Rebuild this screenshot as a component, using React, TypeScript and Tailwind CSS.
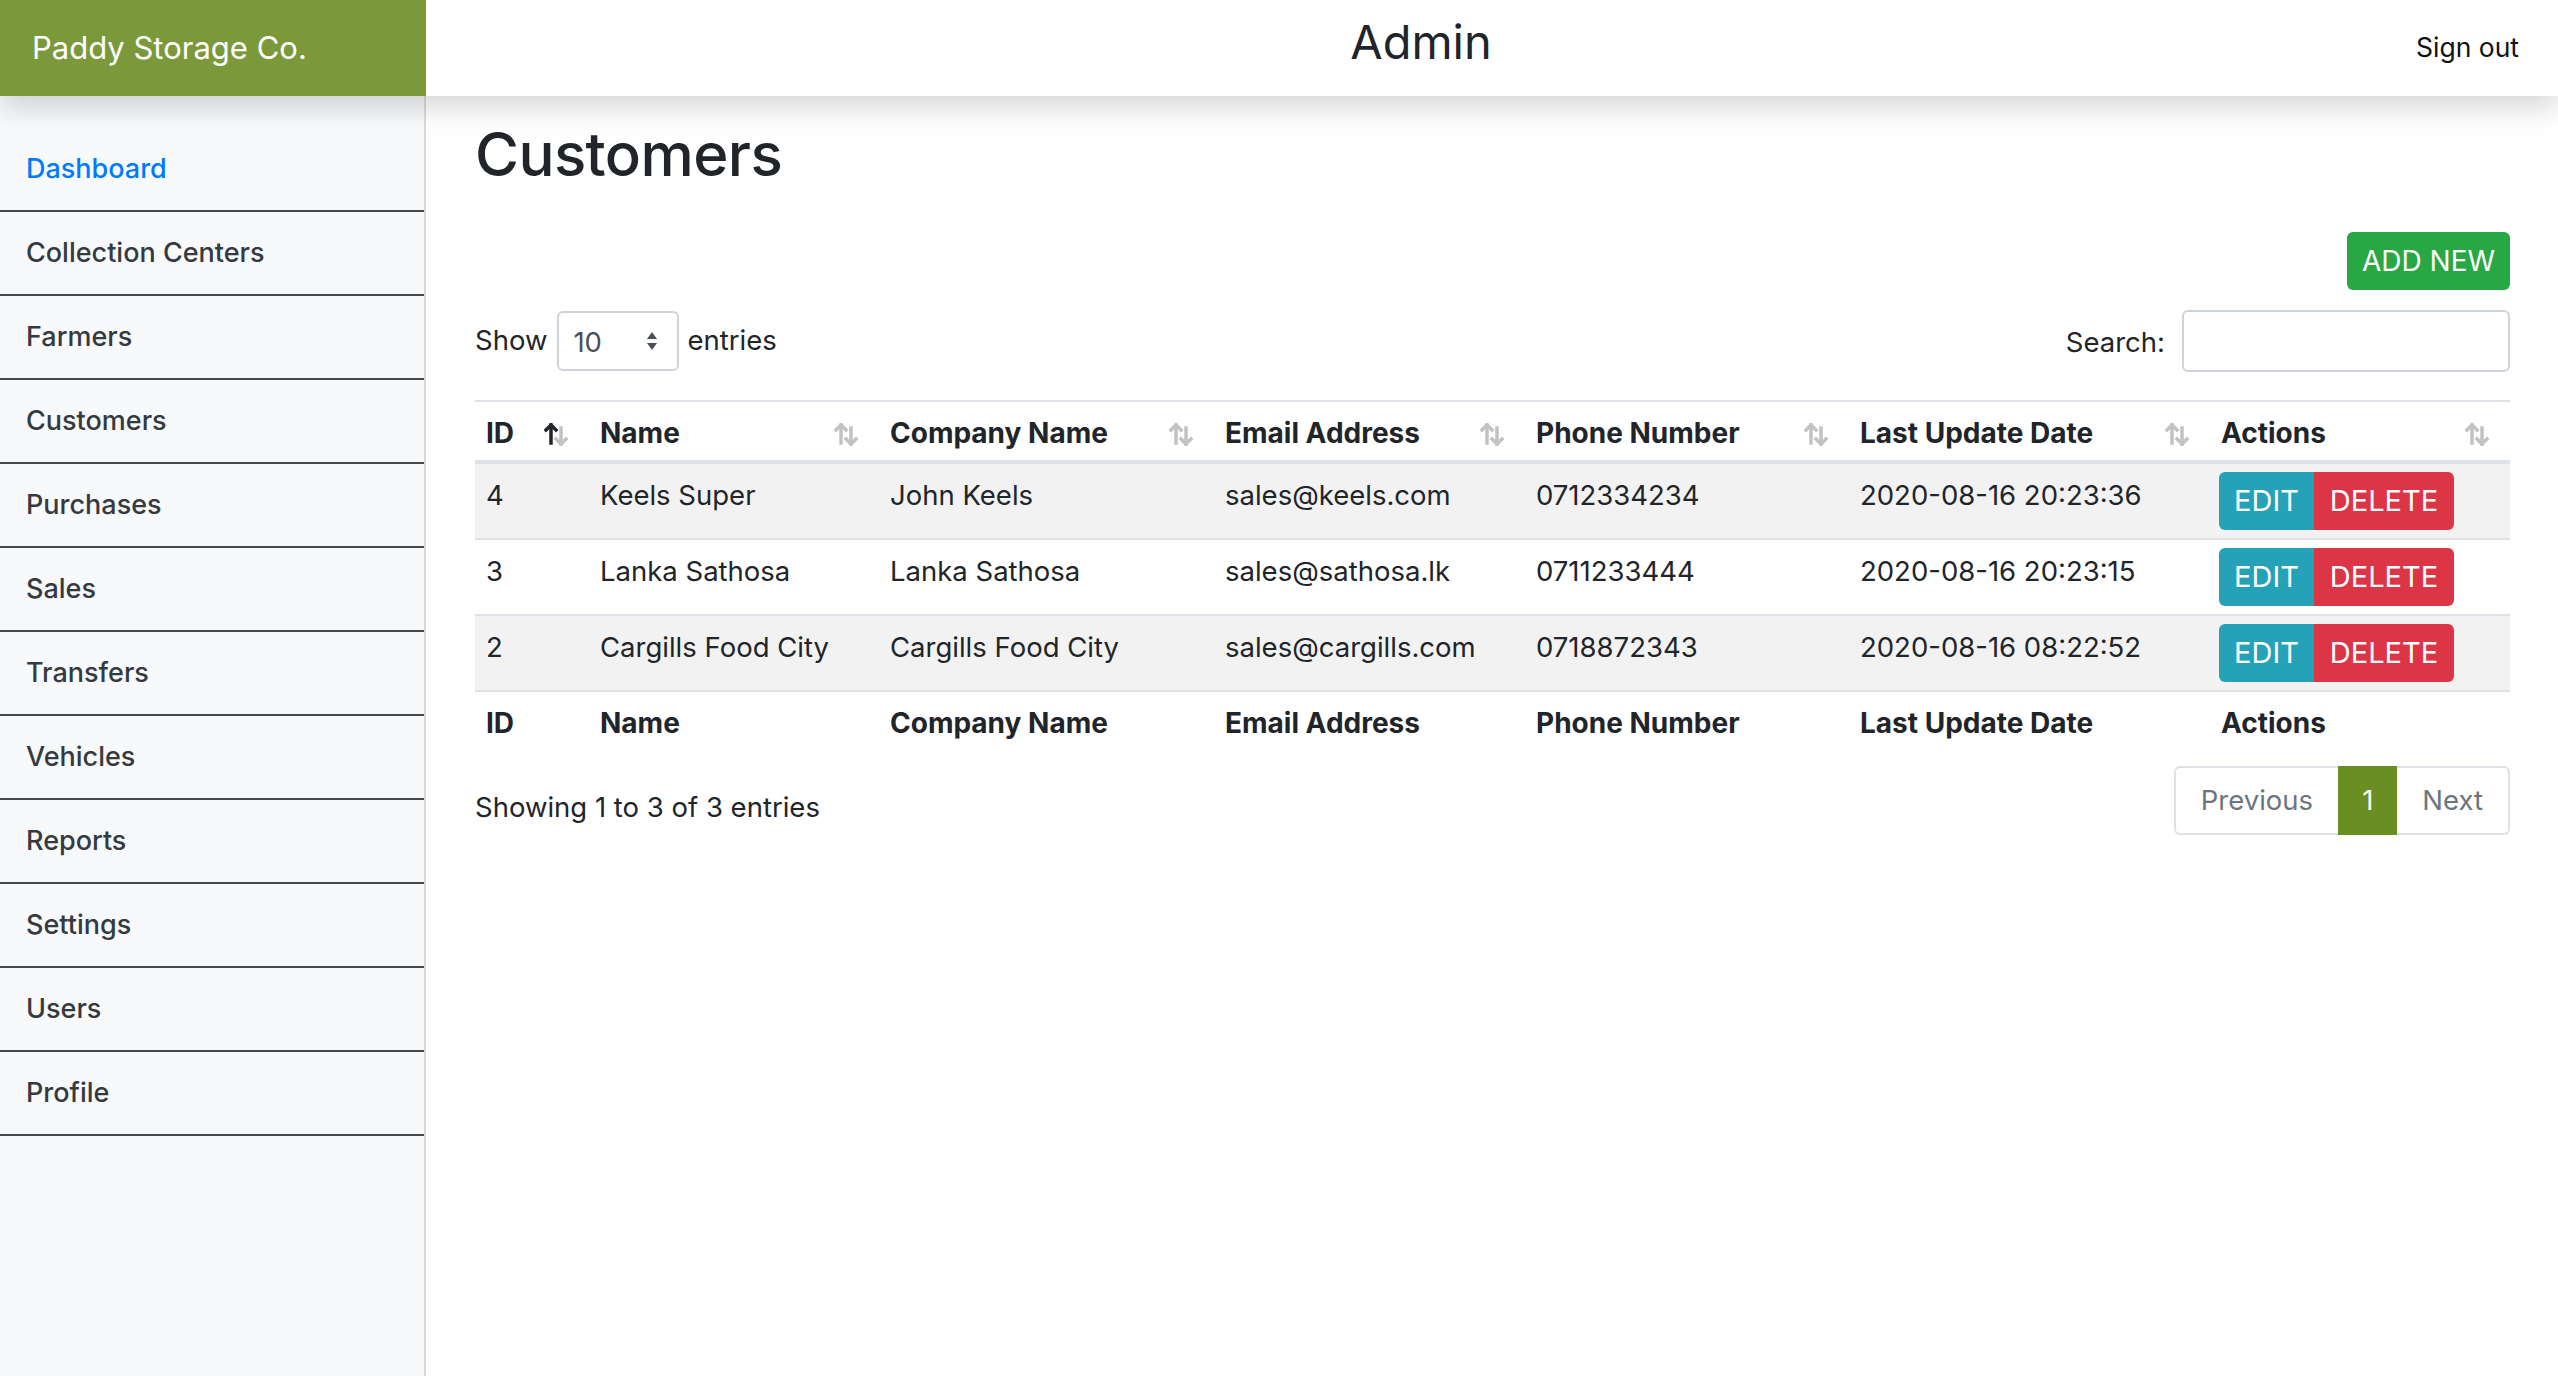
import React from 'react';

const navItems = [
    'Dashboard',
    'Collection Centers',
    'Farmers',
    'Customers',
    'Purchases',
    'Sales',
    'Transfers',
    'Vehicles',
    'Reports',
    'Settings',
    'Users',
    'Profile',
];

const customers = [
    { id: 4, name: 'Keels Super', company: 'John Keels', email: 'sales@keels.com', phone: '0712334234', updated: '2020-08-16 20:23:36' },
    { id: 3, name: 'Lanka Sathosa', company: 'Lanka Sathosa', email: 'sales@sathosa.lk', phone: '0711233444', updated: '2020-08-16 20:23:15' },
    { id: 2, name: 'Cargills Food City', company: 'Cargills Food City', email: 'sales@cargills.com', phone: '0718872343', updated: '2020-08-16 08:22:52' },
];

const columns = ['ID', 'Name', 'Company Name', 'Email Address', 'Phone Number', 'Last Update Date', 'Actions'];

const SortIcon: React.FC<{ active?: boolean }> = ({ active = false }) => (
    <svg width="28" height="24" viewBox="0 0 28 24" fill="none" strokeWidth="3.5" strokeLinecap="square">
        {/* up arrow */}
        <g stroke={active ? '#212529' : '#c2c2c2'}>
            <path d="M7 21V3" />
            <path d="M2 8l5-5 5 5" />
        </g>
        {/* down arrow */}
        <g stroke="#c2c2c2">
            <path d="M17 6v16" />
            <path d="M12 17l5 5 5-5" />
        </g>
    </svg>
);

const SelectArrows = () => (
    <svg width="12" height="22" viewBox="0 0 12 22" fill="#495057">
        <path d="M6 2l5 7H1z" />
        <path d="M6 20l5-7H1z" />
    </svg>
);

const App: React.FC = () => {
    return (
        <div className="min-h-screen bg-white text-[#212529] font-[Inter,sans-serif] text-[27.5px]">
            {/* Top bar */}
            <header className="relative z-10 h-[96px] flex items-center justify-between bg-white shadow-[0_13px_26px_rgba(0,0,0,0.15)]">
                <div className="w-[426px] h-full bg-[#7b993b] text-white text-[31px] flex items-center pl-[32px]">
                    Paddy Storage Co.
                </div>
                <h3 className="text-[47px] leading-none -mt-[14px]">Admin</h3>
                <a href="#" className="pr-[39px] text-[26.5px] text-[#111]">Sign out</a>
            </header>

            <div className="flex min-h-[1280px]">
                {/* Sidebar */}
                <nav className="w-[426px] shrink-0 bg-[#f8f9fa] border-r-2 border-[#dadada] pt-[32px]">
                    {navItems.map((item, idx) => (
                        <a
                            key={item}
                            href="#"
                            className={`flex items-center h-[84px] pl-[26px] border-b-2 border-[#46494c] text-[27px] font-medium ${idx === 0 ? 'text-[#007bff]' : 'text-[#343a40]'}`}
                        >
                            {item}
                        </a>
                    ))}
                </nav>

                {/* Main */}
                <main className="flex-1 pl-[49px] pr-[48px]">
                    <h1 className="mt-[19px] text-[60px] leading-[78px] font-medium tracking-[-0.01em]">Customers</h1>

                    <div className="mt-[39px] flex justify-end">
                        <button className="w-[163px] h-[58px] bg-[#28a745] text-white text-[28px] rounded-[6px] flex items-center justify-center">
                            ADD NEW
                        </button>
                    </div>

                    {/* Length + search */}
                    <div className="mt-[20px] h-[62px] flex items-center justify-between">
                        <label className="flex items-center">
                            <span>Show</span>
                            <div className="ml-[10px] w-[122px] h-[60px] border-2 border-[#ced4da] rounded-[6px] flex items-center justify-between pl-[14px] pr-[19px] text-[#495057]">
                                <span className="mt-[4px]">10</span>
                                <SelectArrows />
                            </div>
                            <span className="ml-[8px]">entries</span>
                        </label>
                        <label className="flex items-center">
                            <span className="mt-[4px]">Search:</span>
                            <input className="ml-[17px] w-[328px] h-[62px] border-2 border-[#ced4da] rounded-[6px] outline-none" />
                        </label>
                    </div>

                    {/* Table */}
                    <table className="mt-[28px] w-full border-collapse text-left">
                        <colgroup>
                            <col className="w-[114px]" />
                            <col className="w-[290px]" />
                            <col className="w-[335px]" />
                            <col className="w-[311px]" />
                            <col className="w-[324px]" />
                            <col className="w-[361px]" />
                            <col />
                        </colgroup>
                        <thead>
                            <tr className="border-t-2 border-[#dee2e6]">
                                {columns.map((col, idx) => (
                                    <th key={col} className="h-[58px] pl-[11px] pr-[17px] pt-[12px] pb-[7px] align-top leading-[39px] text-[28px] font-bold border-b-4 border-[#dee2e6]">
                                        <div className="flex items-center justify-between">
                                            <span>{col}</span>
                                            <SortIcon active={idx === 0} />
                                        </div>
                                    </th>
                                ))}
                            </tr>
                        </thead>
                        <tbody>
                            {customers.map((c, idx) => (
                                <tr key={c.id} className={`border-t-2 border-[#dee2e6] ${idx % 2 === 0 ? 'bg-[#f2f2f2]' : 'bg-white'}`}>
                                    <td className="pl-[11px] py-[8px] align-top leading-[46px]">{c.id}</td>
                                    <td className="pl-[11px] py-[8px] align-top leading-[46px]">{c.name}</td>
                                    <td className="pl-[11px] py-[8px] align-top leading-[46px]">{c.company}</td>
                                    <td className="pl-[11px] py-[8px] align-top leading-[46px]">{c.email}</td>
                                    <td className="pl-[11px] py-[8px] align-top leading-[46px]">{c.phone}</td>
                                    <td className="pl-[11px] py-[8px] align-top leading-[46px]">{c.updated}</td>
                                    <td className="pl-[9px] py-[8px] align-top">
                                        <div className="flex text-[29px]">
                                            <button className="w-[95px] h-[58px] bg-[#25a2b8] text-white rounded-l-[6px]">EDIT</button>
                                            <button className="w-[140px] h-[58px] bg-[#dc3545] text-white rounded-r-[6px]">DELETE</button>
                                        </div>
                                    </td>
                                </tr>
                            ))}
                        </tbody>
                        <tfoot>
                            <tr className="border-t-2 border-[#dee2e6]">
                                {columns.map((col) => (
                                    <th key={col} className="pl-[11px] pt-[12px] pb-[12px] leading-[39px] text-[28px] font-bold align-top">
                                        {col}
                                    </th>
                                ))}
                            </tr>
                        </tfoot>
                    </table>

                    {/* Info + pagination */}
                    <div className="mt-[11px] flex justify-between items-start">
                        <div className="pt-[22px] leading-[39px]">Showing 1 to 3 of 3 entries</div>
                        <ul className="flex h-[69px]">
                            <li className="flex items-center px-[25px] border-2 border-r-0 border-[#dee2e6] rounded-l-[6px] text-[#6c757d]">Previous</li>
                            <li className="flex items-center px-[24px] bg-[#6b8e23] text-white">1</li>
                            <li className="flex items-center px-[25px] border-2 border-l-0 border-[#dee2e6] rounded-r-[6px] text-[#6c757d]">Next</li>
                        </ul>
                    </div>
                </main>
            </div>
        </div>
    );
};

export default App;
